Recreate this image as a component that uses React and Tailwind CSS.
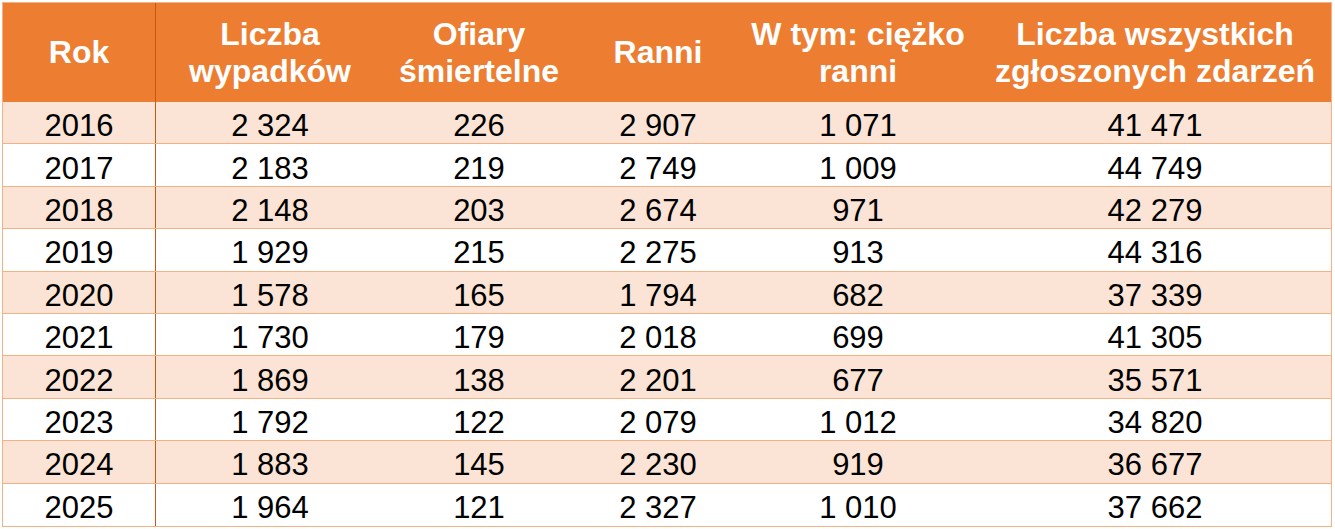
import React from 'react';

const cols = ['w-[153px] border-r border-[#C55A11]', 'w-[228px]', 'w-[190px]', 'w-[168px]', 'w-[232px]', 'flex-1 pl-[5px]'];

const headers = [
  ['Rok'],
  ['Liczba', 'wypadków'],
  ['Ofiary', 'śmiertelne'],
  ['Ranni'],
  ['W tym: ciężko', 'ranni'],
  ['Liczba wszystkich', 'zgłoszonych zdarzeń'],
];

const rows = [
  ['2016', '2 324', '226', '2 907', '1 071', '41 471'],
  ['2017', '2 183', '219', '2 749', '1 009', '44 749'],
  ['2018', '2 148', '203', '2 674', '971', '42 279'],
  ['2019', '1 929', '215', '2 275', '913', '44 316'],
  ['2020', '1 578', '165', '1 794', '682', '37 339'],
  ['2021', '1 730', '179', '2 018', '699', '41 305'],
  ['2022', '1 869', '138', '2 201', '677', '35 571'],
  ['2023', '1 792', '122', '2 079', '1 012', '34 820'],
  ['2024', '1 883', '145', '2 230', '919', '36 677'],
  ['2025', '1 964', '121', '2 327', '1 010', '37 662'],
];

export default function App() {
  return (
    <div className="w-[1335px] h-[529px] bg-white pt-[2px] pl-[2px]" style={{ fontFamily: '"Liberation Sans", Arial, sans-serif' }}>
      <div className="w-[1330px] border border-[#F4B183] flex flex-col">
        <div className="flex h-[99px] bg-[#ED7D31]">
          {headers.map((lines, i) => (
            <div key={i} className={`${cols[i]} flex flex-col items-center justify-center text-white font-bold text-[32px] leading-[37px] text-center`}>
              {lines.map((l) => (
                <span key={l} className="whitespace-nowrap">{l}</span>
              ))}
            </div>
          ))}
        </div>
        {rows.map((row, r) => (
          <div key={row[0]} className={`flex h-[42.4px] ${r < rows.length - 1 ? 'border-b border-[#F4B183]' : ''} ${r % 2 === 0 ? 'bg-[#FBE4D5]' : 'bg-white'}`}>
            {row.map((v, i) => (
              <div key={i} className={`${cols[i]} flex items-center justify-center pt-[6px] text-[31px] leading-none text-black whitespace-nowrap`}>
                {v}
              </div>
            ))}
          </div>
        ))}
      </div>
    </div>
  );
}
